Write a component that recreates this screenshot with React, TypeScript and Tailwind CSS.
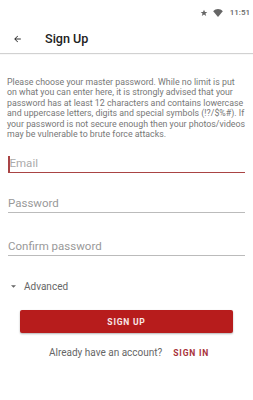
import React from "react";

const lines = [
  "Please choose your master password. While no limit is put",
  "on what you can enter here, it is strongly advised that your",
  "password has at least 12 characters and contains lowercase",
  "and uppercase letters, digits and special symbols (!?/$%#). If",
  "your password is not secure enough then your photos/videos",
  "may be vulnerable to brute force attacks.",
];

export default function App() {
  return (
    <div className="w-[253px] h-[400px] bg-white overflow-hidden" style={{ fontFamily: "Roboto, 'Noto Sans', sans-serif" }}>
      {/* status bar */}
      <div className="h-[25px] flex items-center justify-end pr-[3px] gap-[5px] text-[#666]">
        <svg width="8" height="8" viewBox="0 0 24 24" className="mt-[1px]"><path fill="#666" d="M12 2l3 7h7l-5.6 4.3 2.1 7.7L12 16.6 5.5 21l2.1-7.7L2 9h7z"/></svg>
        <svg width="10" height="8" viewBox="0 0 24 20" className="mt-[1px] mr-[2px]"><path fill="#666" d="M12 20L0 5.5C3.3 2.2 7.5 0 12 0s8.7 2.2 12 5.5z"/></svg>
        <span className="text-[8px] font-medium leading-none">11:51</span>
      </div>
      {/* toolbar */}
      <div className="h-[28px] flex items-center shadow-[0_1px_1px_rgba(0,0,0,0.18)] relative">
        <svg width="11" height="10" viewBox="0 0 24 24" className="ml-[12px]"><path fill="#333" d="M20 11H7.83l5.59-5.59L12 4l-8 8 8 8 1.41-1.41L7.83 13H20z"/></svg>
        <span className="ml-[22px] text-[12.6px] font-medium text-[#222]">Sign Up</span>
      </div>
      {/* paragraph */}
      <div className="pt-[24px] pl-[7px] text-[8.8px] leading-[10.4px] text-[#777]">
        {lines.map((l) => (
          <div key={l} className="whitespace-nowrap">{l}</div>
        ))}
      </div>
      {/* fields */}
      <div className="px-[8px] mt-[16px] flex flex-col">
        <div className="h-[18px] flex items-center border-b-[1.5px] border-[#a94444] relative">
          <div className="w-[1.5px] h-[16px] bg-[#a94444]" />
          <span className="text-[11.5px] text-[#aaa] leading-none">Email</span>
        </div>
        <div className="h-[18px] mt-[22px] flex items-center border-b border-[#bbb]">
          <span className="text-[11.5px] text-[#999] leading-none">Password</span>
        </div>
        <div className="h-[18px] mt-[25px] flex items-center border-b border-[#bbb]">
          <span className="text-[11.5px] text-[#999] leading-none">Confirm password</span>
        </div>
      </div>
      {/* advanced */}
      <div className="mt-[23px] flex items-center h-[14px] pl-[11px]">
        <svg width="5" height="3" viewBox="0 0 10 5"><path fill="#666" d="M0 0h10L5 5z"/></svg>
        <span className="ml-[8px] text-[10px] text-[#666]">Advanced</span>
      </div>
      {/* button */}
      <div className="px-[20px] mt-[17px]">
        <div className="h-[23px] bg-[#b71c1c] rounded-[2px] shadow-[0_1px_2px_rgba(0,0,0,0.3)] flex items-center justify-center">
          <span className="text-[8.5px] font-bold tracking-[0.8px] text-white/90">SIGN UP</span>
        </div>
      </div>
      <div className="mt-[12px] flex items-center justify-center gap-[11px] pl-[5px]">
        <span className="text-[10px] text-[#666]">Already have an account?</span>
        <span className="text-[8.5px] font-bold tracking-[0.8px] text-[#a8323a]">SIGN IN</span>
      </div>
    </div>
  );
}
